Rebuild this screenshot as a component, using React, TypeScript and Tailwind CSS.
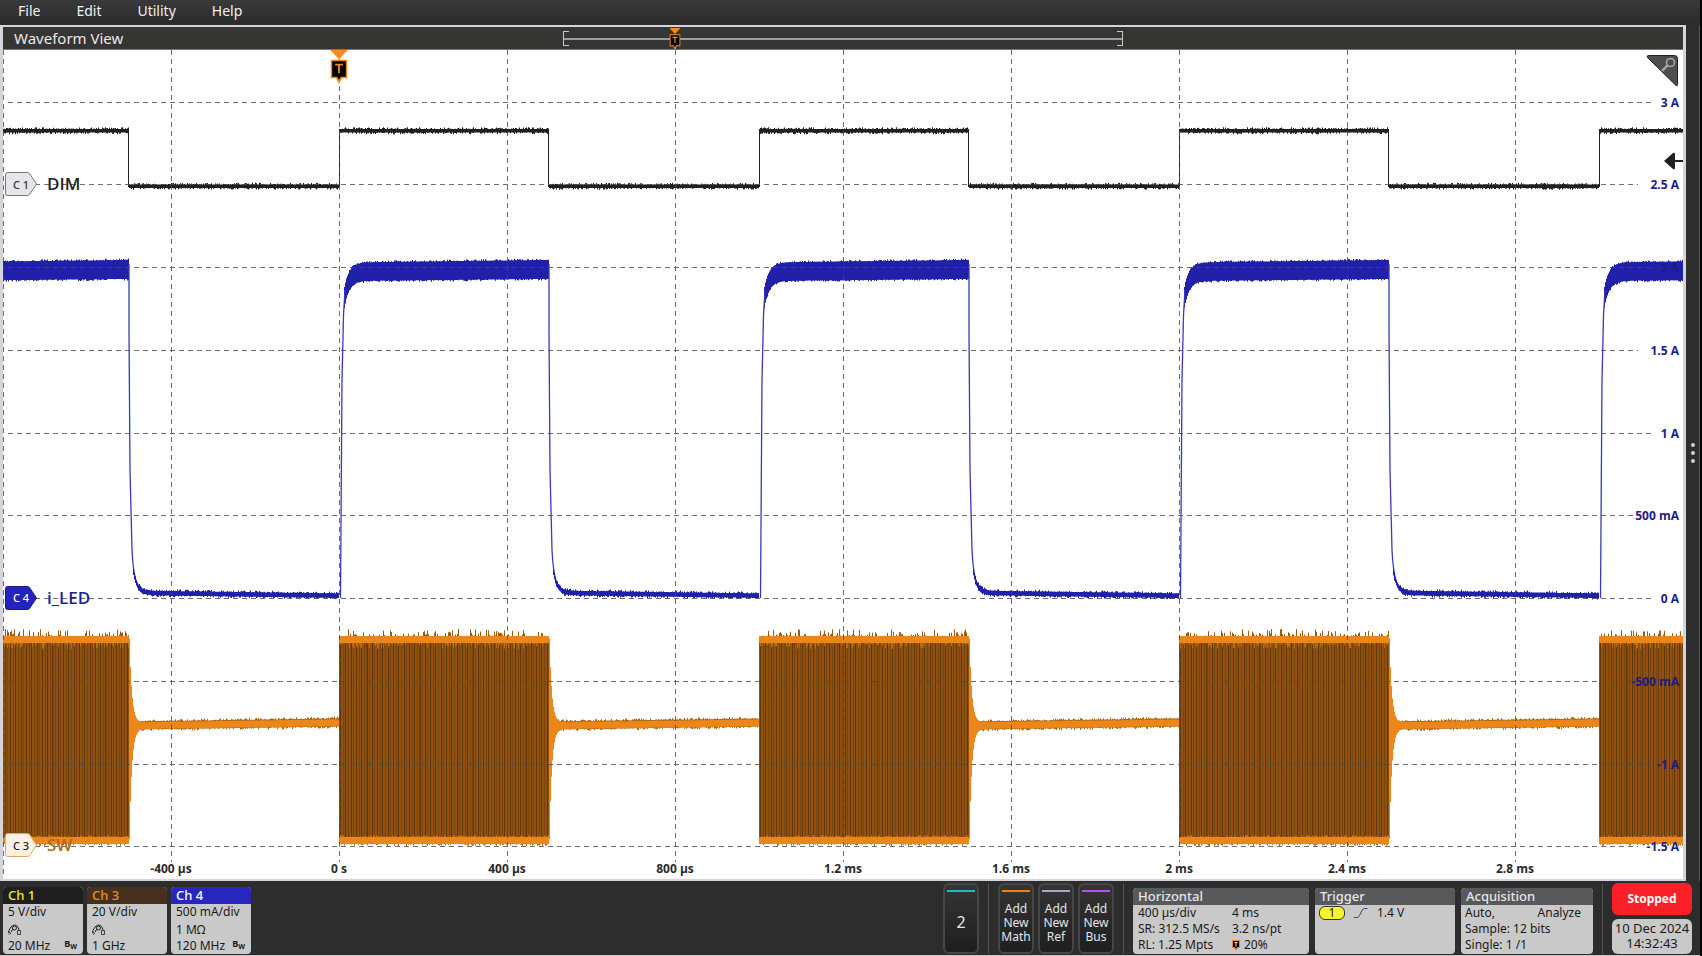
import React from 'react';

const PLOT_W = 1680;
const PLOT_H = 829;
const PERIOD = 420;
const ON = 210;

const verticals = [0, 168, 336, 504, 672, 840, 1008, 1176, 1344, 1512];

const currentScale = [
  { label: '3 A', y: 52 },
  { label: '2.5 A', y: 134 },
  { label: '2 A', y: 217 },
  { label: '1.5 A', y: 300 },
  { label: '1 A', y: 383 },
  { label: '500 mA', y: 465 },
  { label: '0 A', y: 548 },
  { label: '-500 mA', y: 631 },
  { label: '-1 A', y: 714 },
  { label: '-1.5 A', y: 796 },
];

const timeScale = [
  { label: '-400 µs', x: 168 },
  { label: '0 s', x: 336 },
  { label: '400 µs', x: 504 },
  { label: '800 µs', x: 672 },
  { label: '1.2 ms', x: 840 },
  { label: '1.6 ms', x: 1008 },
  { label: '2 ms', x: 1176 },
  { label: '2.4 ms', x: 1344 },
  { label: '2.8 ms', x: 1512 },
];

// start of every LED-on interval, the first one begins left of the view
const rises = [-84, 336, 756, 1176, 1596];

const pctX = (x: number) => `${(x / PLOT_W) * 100}%`;
const pctY = (y: number) => `${(y / PLOT_H) * 100}%`;

function random(seed: number) {
  let s = seed;
  return () => {
    s = (s * 16807) % 2147483647;
    return s / 2147483647;
  };
}

type Edge = (x: number) => number;

// closed band between two edges, with ragged noise on both of them
function band(from: number, to: number, top: Edge, bottom: Edge, noise: number, seed: number) {
  const rnd = random(seed);
  const upper: string[] = [];
  const lower: string[] = [];
  for (let x = from; x < to; x += 1) {
    const t = top(x) - Math.pow(rnd(), 3) * noise;
    const b = bottom(x) + Math.pow(rnd(), 3) * noise;
    upper.push(`${x},${t.toFixed(1)} ${x + 1},${t.toFixed(1)}`);
    lower.unshift(`${x + 1},${b.toFixed(1)} ${x},${b.toFixed(1)}`);
  }
  return upper.concat(lower).join(' ');
}

function spikes(from: number, to: number, y: number, length: number, seed: number, power = 2) {
  const rnd = random(seed);
  let d = '';
  for (let x = from; x < to; x += 1) {
    const h = Math.pow(rnd(), power) * length;
    d += `M${x + 0.5} ${y}v${h.toFixed(1)}`;
  }
  return d;
}

function stripes(from: number, to: number, step: number) {
  let d = '';
  for (let x = from + 1; x < to; x += step) {
    d += `M${Math.round(x) + 0.5} 592V788`;
  }
  return d;
}

function DimTrace() {
  return (
    <g fill="#231f20" stroke="none">
      {rises.map((r, i) => (
        <g key={r}>
          <polygon points={band(r, r + ON, () => 79, () => 82.5, 1.8, 11 + i)} />
          <polygon points={band(r + ON, r + PERIOD, () => 134.5, () => 138, 1.8, 31 + i)} />
          <path d={`M${r + 0.5} 80V137M${r + ON - 0.5} 80V137`} stroke="#231f20" strokeWidth="1" />
        </g>
      ))}
    </g>
  );
}

function LedTrace() {
  return (
    <g fill="#2020a8">
      {rises.map((r, i) => (
        <g key={r}>
          <polygon
            points={band(
              r + 5,
              r + ON,
              (x) => 212.5 - (x - r) * 0.012 + 30 * Math.exp(-(x - r - 4) / 5),
              (x) => 231 - (x - r) * 0.01 + 32 * Math.exp(-(x - r - 4) / 5),
              1.6,
              51 + i,
            )}
          />
          <path
            d={`M${r + 1.5} 548L${r + 3} 330L${r + 4.5} 265L${r + 6} 240`}
            fill="none"
            stroke="#3a3ab4"
            strokeWidth="1.3"
          />
          <path
            d={`M${r + ON} 214V282L${r + ON + 1} 420L${r + ON + 3} 500Q${r + ON + 5} 542 ${r + ON + 16} 542`}
            fill="none"
            stroke="#3a3ab4"
            strokeWidth="1.3"
          />
          <polygon
            points={band(
              r + ON + 4,
              r + PERIOD,
              (x) => 540.5 + (x - r - ON) * 0.014 - 28 * Math.exp(-(x - r - ON - 3) / 4),
              (x) => 545 + (x - r - ON) * 0.014 - 26 * Math.exp(-(x - r - ON - 3) / 4),
              1.8,
              71 + i,
            )}
          />
        </g>
      ))}
    </g>
  );
}

function SwitchTrace() {
  return (
    <g>
      {rises.map((r, i) => {
        const end = r + ON;
        return (
          <g key={r}>
            <rect x={r} y="588" width={ON} height="206" fill="#8f5110" />
            <path d={stripes(r, end, 2.65)} stroke="#7a440c" strokeWidth="1" />
            <path d={stripes(r, end, 5.3)} stroke="#64370a" strokeWidth="1" />
            <path d={spikes(r, end, 588, -9, 91 + i, 3)} stroke="#9a5a14" strokeWidth="1" />
            <path d={spikes(r, end, 592, 7, 111 + i, 3)} stroke="#b96a14" strokeWidth="1" />
            <path d={spikes(r, end, 793, 3, 131 + i, 2)} stroke="#b96a14" strokeWidth="1" />
            <path d={spikes(r, end, 788, -3, 151 + i, 1)} stroke="#c06f16" strokeWidth="1" />
            <rect x={r} y="586" width={ON} height="7" fill="#ea861a" />
            <rect x={r} y="787" width={ON} height="7" fill="#ea861a" />
            <polygon
              fill="#b5690f"
              points={band(
                end + 8,
                r + PERIOD,
                (x) => 671.5 - 3 * ((x - end) / ON),
                (x) => 679.5 - 3 * ((x - end) / ON),
                2,
                171 + i,
              )}
            />
            <polygon
              fill="#ea861a"
              points={band(
                end,
                r + PERIOD,
                (x) => 672.5 - 3 * ((x - end) / ON) - 84 * Math.exp(-(x - end) / 2.4),
                (x) => 679 - 3 * ((x - end) / ON) + 110 * Math.exp(-(x - end) / 2.4),
                0.5,
                191 + i,
              )}
            />
          </g>
        );
      })}
    </g>
  );
}

function Grid() {
  return (
    <g stroke="#4a4a4a" strokeOpacity="0.8" strokeDasharray="5 4" strokeWidth="1">
      {currentScale.map((m) => (
        <path key={m.y} d={`M5 ${m.y + 0.5}H${m.label.length > 4 ? 1635 : 1652}`} />
      ))}
      {verticals.map((x) => (
        <path key={x} d={`M${x + 0.5} 0V${x === 0 ? 825 : 812}`} />
      ))}
    </g>
  );
}

function TriggerMark({ className }: { className: string }) {
  return (
    <svg viewBox="0 0 18 35" className={className} aria-hidden="true">
      <path d="M0 0h18l-9 9.500z" fill="#f7891f" />
      <path d="M0.500 10h17v19h-5.500l-3 6-3-6h-5.500z" fill="#f7891f" />
      <path d="M2 11.500h14v16h-5l-2 3-2-3h-5z" fill="#000" />
      <path d="M5 15h8M9 15v9" stroke="#f7891f" strokeWidth="1.800" />
    </svg>
  );
}

interface ChannelTagProps {
  name: string;
  y: number;
  label: string;
  fill: string;
  stroke: string;
  tagText: string;
  labelText: string;
}

function ChannelTag({ name, y, label, fill, stroke, tagText, labelText }: ChannelTagProps) {
  return (
    <div className="absolute left-0.5 flex -translate-y-1/2 items-center" style={{ top: pctY(y) }}>
      <div className="relative flex h-6 w-8 items-center pl-2">
        <svg viewBox="0 0 32 24" className="absolute inset-0 h-6 w-8">
          <path d="M2.500 0.500h19.500q1.500 0 2.500 1l7 10.500-7 10.500q-1 1-2.500 1h-19.500q-2 0-2-2v-19q0-2 2-2z" fill={fill} stroke={stroke} />
        </svg>
        <span className={`relative text-[11px] leading-none font-medium ${tagText}`}>{name}</span>
      </div>
      <span className={`ml-2.5 font-['Open_Sans','Noto_Sans',sans-serif] text-[17px] leading-6 font-semibold ${labelText}`}>
        {label}
      </span>
    </div>
  );
}

function Plot() {
  return (
    <div className="relative flex-1 overflow-hidden bg-white">
      <svg
        viewBox={`0 0 ${PLOT_W} ${PLOT_H}`}
        preserveAspectRatio="none"
        className="absolute inset-0 h-full w-full"
      >
        <DimTrace />
        <LedTrace />
        <SwitchTrace />
        <Grid />
      </svg>

      <div className="font-['Open_Sans','Noto_Sans',sans-serif] text-xs font-bold">
        {currentScale.map((m) => (
          <span
            key={m.label}
            className="absolute right-1 -translate-y-1/2 text-[#1c1c88]"
            style={{ top: pctY(m.y + 1) }}
          >
            {m.label}
          </span>
        ))}
        {timeScale.map((m) => (
          <span
            key={m.label}
            className="absolute bottom-0.5 -translate-x-1/2 text-[#2a2a2a]"
            style={{ left: pctX(m.x) }}
          >
            {m.label}
          </span>
        ))}
      </div>

      <ChannelTag name="C 1" y={134} label="DIM" fill="#e6e6e6" stroke="#77777a" tagText="text-[#333]" labelText="text-[#222]" />
      <ChannelTag name="C 4" y={548} label="i_LED" fill="#2424bd" stroke="#1a1a8c" tagText="text-white" labelText="text-[#20209c]" />
      <ChannelTag name="C 3" y={795} label="SW" fill="#fdf1e6" stroke="#eaa45c" tagText="text-[#222]" labelText="text-[#b4681a]" />

      <div className="absolute top-0 -translate-x-1/2" style={{ left: pctX(336) }}>
        <TriggerMark className="h-[34px] w-[18px]" />
      </div>

      <button aria-label="Zoom" className="absolute top-1 right-1">
        <svg viewBox="0 0 34 34" className="h-[34px] w-[34px]">
          <path d="M3.500 1.500h26q3 0 3 3v26q0 2-1.500 1l-28.500-28q-1-2 1-2z" fill="#4d4d4d" stroke="#222" />
          <circle cx="25.500" cy="8.500" r="4" fill="none" stroke="#a8a8a8" strokeWidth="1.600" />
          <path d="M22.500 11.500l-5.500 5.500" stroke="#a8a8a8" strokeWidth="2.400" />
        </svg>
      </button>

      <svg viewBox="0 0 19 18" className="absolute right-0 h-[18px] w-[19px] -translate-y-1/2" style={{ top: pctY(111) }}>
        <path d="M0 9l9-8q2-1 2 1v14q0 2-2 1z" fill="#231f20" />
        <path d="M10 9h9" stroke="#231f20" strokeWidth="2" />
      </svg>
    </div>
  );
}

function TitleBar() {
  return (
    <div className="flex h-[23px] items-center border-b border-[#777] bg-[#353533]">
      <h1 className="w-1/3 pl-[11px] text-[15px] leading-none text-[#e8e8e8]">Waveform View</h1>
      <div className="relative h-[15px] w-1/3">
        <div className="absolute inset-y-0 left-0 w-1.5 border-y border-l border-[#c8c8c8]" />
        <div className="absolute inset-y-0 right-0 w-1.5 border-y border-r border-[#c8c8c8]" />
        <div className="mt-[7px] h-0.5 bg-[#9c9c9c]" />
        <div className="absolute -top-[3px] left-1/5 -translate-x-1/2">
          <TriggerMark className="h-[22px] w-3" />
        </div>
      </div>
    </div>
  );
}

function ProbeIcon() {
  return (
    <svg viewBox="0 0 14 12" className="h-3 w-3.5" fill="none" stroke="#222" aria-label="Probe">
      <path d="M1 9.500q-1-1 0-3q1.500-4.500 5-5.500q4 0 5 5" />
      <circle cx="6.500" cy="4" r="2" />
      <path d="M1 7.500l1.500 2l-1 1" />
      <path d="M9.500 6.500h3v4h-3z" strokeWidth="0.800" />
      <path d="M3.500 8q0-2 1.500-3" />
    </svg>
  );
}

interface ChannelCardProps {
  name: string;
  header: string;
  scale: string;
  input: React.ReactNode;
  bandwidth: string;
  limited?: boolean;
}

function ChannelCard({ name, header, scale, input, bandwidth, limited }: ChannelCardProps) {
  return (
    <button className="h-[67px] w-20 overflow-hidden rounded-sm bg-[#c9c9c9] text-left text-xs text-[#1a1a1a]">
      <div className={`h-[17px] pl-[5px] text-[13px] leading-4 font-medium ${header}`}>{name}</div>
      <div className="h-[17px] pl-[5px] leading-4">{scale}</div>
      <div className="flex h-[17px] items-center pl-[5px] leading-4">{input}</div>
      <div className="flex h-4 justify-between pr-1.5 pl-[5px] leading-4">
        {bandwidth}
        {limited && (
          <span className="text-[9px] leading-[11px] font-bold">
            B<sub className="text-[7px]">W</sub>
          </span>
        )}
      </div>
    </button>
  );
}

function AddButton({ lines, accent }: { lines: string[]; accent: string }) {
  return (
    <button className="flex h-[71px] w-9 flex-col items-center rounded-md border-2 border-[#464646] bg-gradient-to-b from-[#353535] to-[#1f1f1f] pt-[5px] text-[#e4e4e4]">
      <span className={`mb-2 h-0.5 w-7 ${accent}`} />
      {lines.length === 1 ? (
        <span className="flex flex-1 items-center pb-2 text-base leading-none">{lines[0]}</span>
      ) : (
        <span className="flex flex-col pt-0.5 text-xs leading-[14px]">
          {lines.map((line) => (
            <span key={line}>{line}</span>
          ))}
        </span>
      )}
    </button>
  );
}

function Panel({ title, width, children }: { title: string; width: string; children: React.ReactNode }) {
  return (
    <section className={`h-[66px] overflow-hidden rounded-sm bg-[#c9c9c9] text-xs leading-4 text-[#1a1a1a] ${width}`}>
      <h2 className="h-[17px] bg-[#58595b] pl-[5px] text-[13px] leading-4 font-medium text-[#e6e6e6]">{title}</h2>
      {children}
    </section>
  );
}

function Divider() {
  return <div className="mx-[9px] h-[70px] w-px bg-[#555]" />;
}

function SettingsBar() {
  return (
    <footer className="flex h-[75px] items-end border-b border-[#c8c8c8] pb-px pl-[3px] whitespace-nowrap">
      <div className="flex gap-1">
        <ChannelCard name="Ch 1" header="bg-[#1e1e1e] text-[#f5ee1e]" scale="5 V/div" input={<ProbeIcon />} bandwidth="20 MHz" limited />
        <ChannelCard name="Ch 3" header="bg-[#46311e] text-[#f08a24]" scale="20 V/div" input={<ProbeIcon />} bandwidth="1 GHz" />
        <ChannelCard name="Ch 4" header="bg-[#2727c0] text-white" scale="500 mA/div" input="1 MΩ" bandwidth="120 MHz" limited />
      </div>

      <div className="ml-auto flex items-end pr-2">
        <AddButton lines={['2']} accent="bg-[#22b8bd]" />
        <Divider />
        <div className="flex gap-1">
          <AddButton lines={['Add', 'New', 'Math']} accent="bg-[#e9821b]" />
          <AddButton lines={['Add', 'New', 'Ref']} accent="bg-[#a9a6c4]" />
          <AddButton lines={['Add', 'New', 'Bus']} accent="bg-[#b155e6]" />
        </div>
        <Divider />
        <div className="flex gap-1.5">
          <Panel title="Horizontal" width="w-44">
            <div className="grid grid-cols-[94px_1fr] pl-[5px]">
              <span>400 µs/div</span>
              <span>4 ms</span>
              <span>SR: 312.5 MS/s</span>
              <span>3.2 ns/pt</span>
              <span>RL: 1.25 Mpts</span>
              <span className="flex items-center gap-1">
                <svg viewBox="0 0 8 11" className="h-[11px] w-2" aria-hidden="true">
                  <path d="M0 0h8v8h-2l-2 3-2-3h-2z" fill="#f7891f" />
                  <path d="M1 1h6v6h-2l-1 2-1-2h-2z" fill="#000" />
                  <path d="M2.500 2.500h3M4 2.500v4" stroke="#fff" />
                </svg>
                20%
              </span>
            </div>
          </Panel>
          <Panel title="Trigger" width="w-[140px]">
            <div className="flex items-center gap-2 pt-px pl-1">
              <span className="h-3.5 w-[26px] rounded-md border border-[#333] bg-[#fbf52b] text-center leading-3">1</span>
              <svg viewBox="0 0 16 12" className="h-3 w-4" fill="none" stroke="#3c3c78" aria-label="Rising edge">
                <path d="M1 10.500h3q1.500 0 2.500-2l2.500-5q1-2 2.500-2h3" />
              </svg>
              <span className="leading-[14px]">1.4 V</span>
            </div>
          </Panel>
          <Panel title="Acquisition" width="w-[132px]">
            <div className="pr-3 pl-1">
              <div className="flex justify-between">
                <span>Auto,</span>
                <span>Analyze</span>
              </div>
              <div>Sample: 12 bits</div>
              <div>Single: 1 /1</div>
            </div>
          </Panel>
        </div>
        <Divider />
        <div className="flex w-20 flex-col gap-1">
          <button className="h-8 rounded-md bg-[#fb1f27] text-xs leading-none font-bold text-white">Stopped</button>
          <time className="h-[35px] rounded-md bg-[#c9c9c9] pt-0.5 text-center text-[13px] leading-[15px] text-[#1a1a1a]">
            10 Dec 2024
            <br />
            14:32:43
          </time>
        </div>
      </div>
    </footer>
  );
}

export default function App() {
  return (
    <div className="flex min-h-screen flex-col border-r-2 border-black bg-[#2d2d2d] font-['Noto_Sans','Open_Sans',sans-serif]">
      <nav className="flex h-[25px] items-center gap-9 bg-gradient-to-b from-[#3a3a3a] to-[#2b2b2b] pb-1 pl-[18px] text-sm leading-none text-[#f0f0f0]">
        <button>File</button>
        <button>Edit</button>
        <button>Utility</button>
        <button>Help</button>
      </nav>
      <main className="flex flex-1">
        <div className="flex flex-1 flex-col border-x-3 border-t-2 border-b-2 border-[#d4d4da]">
          <TitleBar />
          <Plot />
        </div>
        <button aria-label="Open side panel" className="flex w-3.5 flex-col items-center justify-center gap-1 border-r border-[#555]">
          <span className="h-1 w-1 rounded-full bg-[#d0d0d0]" />
          <span className="h-1 w-1 rounded-full bg-[#d0d0d0]" />
          <span className="h-1 w-1 rounded-full bg-[#d0d0d0]" />
        </button>
      </main>
      <SettingsBar />
    </div>
  );
}
